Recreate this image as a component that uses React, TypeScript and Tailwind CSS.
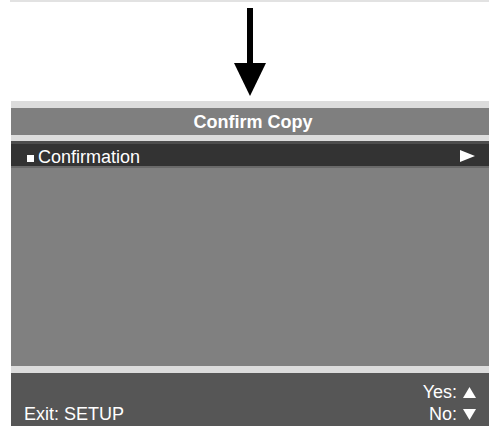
const font = { fontFamily: '"Liberation Sans", Arial, sans-serif' };

const TriRight = () => (
  <svg width="15" height="12" viewBox="0 0 15 12" className="block">
    <path d="M0 0L15 6L0 12Z" fill="white" />
  </svg>
);

const TriUp = () => (
  <svg width="13" height="11" viewBox="0 0 13 11" className="block">
    <path d="M6.5 0L13 11H0Z" fill="white" />
  </svg>
);

const TriDown = () => (
  <svg width="13" height="11" viewBox="0 0 13 11" className="block">
    <path d="M0 0H13L6.5 11Z" fill="white" />
  </svg>
);

export default function App() {
  return (
    <div className="w-[489px] h-[426px] bg-white overflow-hidden" style={font}>
      <div className="ml-[10px] h-[2px] bg-[#e2e2e2]" />
      <div className="h-[99px]">
        <svg width="489" height="99" viewBox="0 0 489 99" className="block">
          <rect x="247" y="6" width="6" height="58" fill="black" />
          <path d="M234 61H266L250 94Z" fill="black" />
        </svg>
      </div>

      <div className="ml-[11px] flex flex-col text-white">
        <div className="h-[7px] bg-[#dcdcdc]" />
        <div className="h-[27px] bg-[#7f7f7f] text-center text-[18px] font-bold leading-[29px] pl-[6px] overflow-hidden">
          Confirm Copy
        </div>
        <div className="h-[6px] bg-[#dcdcdc]" />
        <div className="h-[3px] bg-[#4d4d4d]" />
        <div className="h-[22px] bg-[#333333] flex items-center pl-[16px] pr-[14px]">
          <div className="w-[7px] h-[7px] bg-white mt-[6px]" />
          <span className="ml-[4px] text-[18px] leading-[22px] pt-[3px]">Confirmation</span>
          <div className="ml-auto mt-[2px]">
            <TriRight />
          </div>
        </div>
        <div className="h-[2px] bg-[#6a6a6a]" />
        <div className="h-[198px] bg-[#808080]" />
        <div className="h-[7px] bg-[#dcdcdc]" />
        <div className="h-[53px] bg-[#565656] flex items-end justify-between pl-[13px] pr-[13px] pb-[1px] text-[18px] leading-[22px]">
          <span>Exit: SETUP</span>
          <div className="flex flex-col items-end">
            <div className="flex items-center gap-[6px]">
              <span>Yes:</span>
              <TriUp />
            </div>
            <div className="flex items-center gap-[6px]">
              <span>No:</span>
              <TriDown />
            </div>
          </div>
        </div>
      </div>
    </div>
  );
}
